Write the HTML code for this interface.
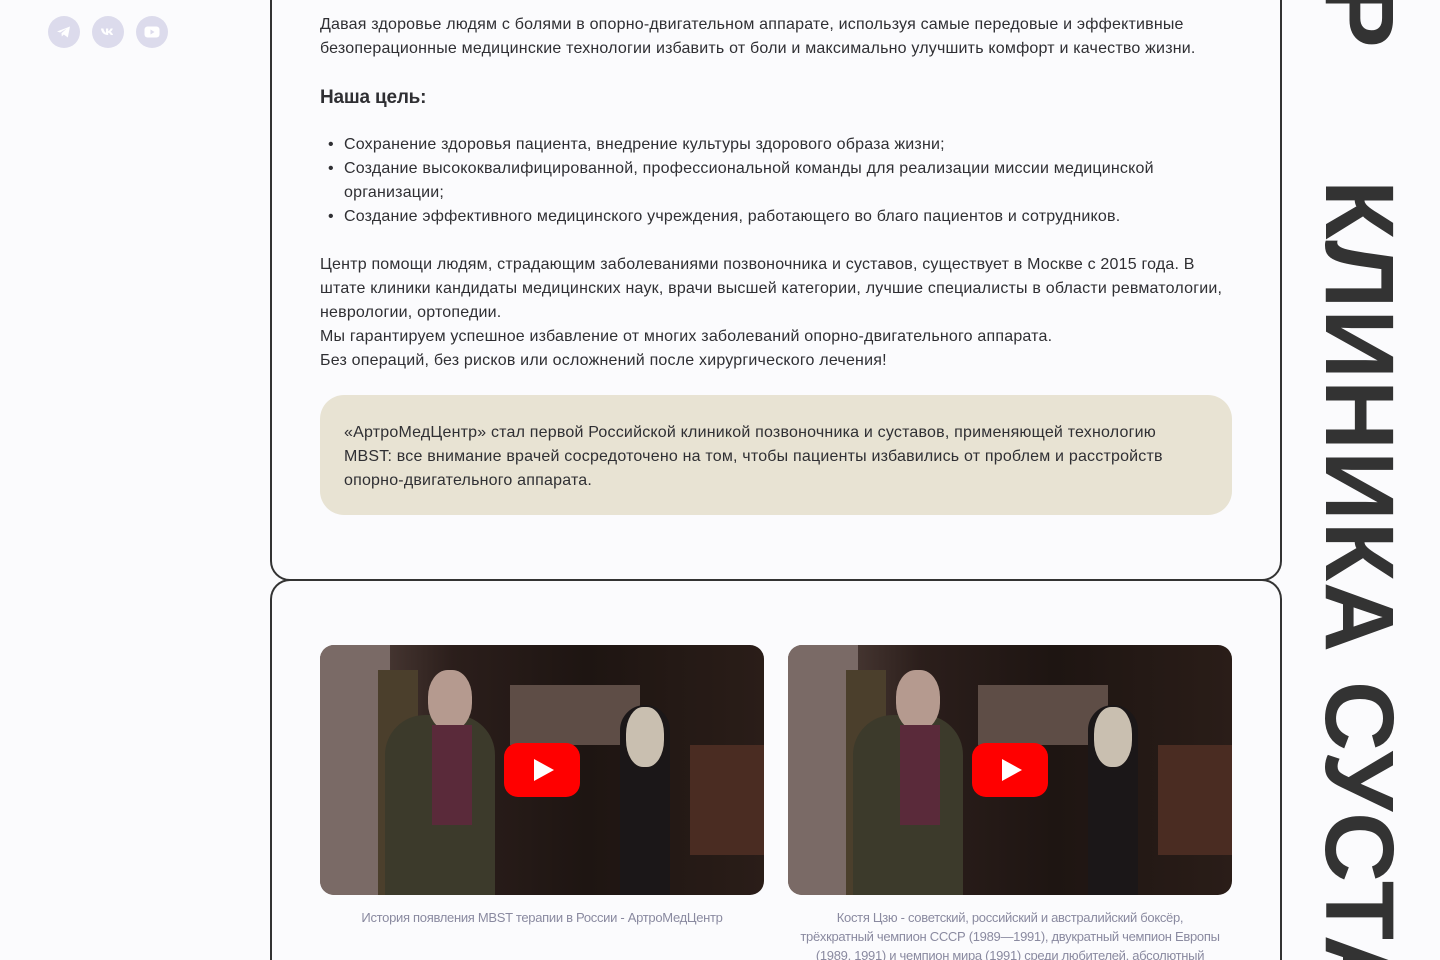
<!DOCTYPE html>
<html><head><meta charset="utf-8">
<style>
*{margin:0;padding:0;box-sizing:border-box}
html,body{width:1440px;height:960px;overflow:hidden;background:#fbfbfd;font-family:"Liberation Sans",sans-serif;color:#2f2f33}
#w{position:relative;width:1440px;height:960px;overflow:hidden}
.card{position:absolute;left:270px;width:1012px;border:2px solid #333;border-radius:20px;background:#fbfbfd}
.t{position:absolute;left:320px;font-size:16px;line-height:24px;white-space:nowrap;letter-spacing:0.2px}
.soc{position:absolute;top:16px;width:32px;height:32px;border-radius:50%;background:#dcdbec}
.vert{position:absolute;transform:rotate(90deg);transform-origin:0 0;font-weight:bold;font-size:97px;line-height:97px;color:#333;white-space:nowrap;letter-spacing:1px}
.vid{position:absolute;top:645px;width:444px;height:250px;border-radius:14px;overflow:hidden;background:linear-gradient(90deg,#6b5a55 0%,#4a3a35 12%,#2b1e1b 30%,#1e1512 60%,#2a1d18 100%)}
.vid .sh{position:absolute;background:#3a2b24}
.yt{position:absolute;left:184px;top:98px;width:76px;height:54px;border-radius:14px;background:#f00}
.yt:after{content:"";position:absolute;left:30px;top:16px;border-left:20px solid #fff;border-top:11px solid transparent;border-bottom:11px solid transparent}
.cap{position:absolute;top:908px;width:444px;text-align:center;font-size:13px;line-height:19px;color:#8a8aa0;letter-spacing:-0.3px}
</style></head><body><div id="w">
<div class="soc" style="left:48px"><svg width="32" height="32" viewBox="0 0 32 32"><path d="M9 15.5l13-5-2.2 11-4-3-2 2-.3-3.2 5.2-4.8-6.6 4z" fill="#fff"/></svg></div>
<div class="soc" style="left:92px"><svg width="32" height="32" viewBox="0 0 32 32"><path d="M9 12.5h2.4c.4 2.3 1.7 4 2.6 4.3v-4.3h2.2v2.5c1-.1 2-1.3 2.4-2.5h2.2c-.4 1.5-1.5 2.7-2.3 3.3.8.4 2 1.4 2.6 3.2h-2.4c-.5-1.2-1.5-2.1-2.5-2.2v2.2h-.3C12 19 9.3 16.4 9 12.5z" fill="#fff"/></svg></div>
<div class="soc" style="left:136px"><svg width="32" height="32" viewBox="0 0 32 32"><rect x="8.5" y="10.5" width="15" height="11" rx="3" fill="#fff"/><path d="M14.5 13.5v5l4-2.5z" fill="#dcdbec"/></svg></div>

<div class="card" style="top:-40px;height:621px"></div>
<div class="card" style="top:579px;height:381px;border-bottom:none;border-radius:20px 20px 0 0"></div>

<div class="t" style="top:13px">Давая здоровье людям с болями в опорно-двигательном аппарате, используя самые передовые и эффективные</div>
<div class="t" style="top:37px">безоперационные медицинские технологии избавить от боли и максимально улучшить комфорт и качество жизни.</div>
<div class="t" style="top:85px;font-size:19px;font-weight:bold;line-height:26px;letter-spacing:-0.2px">Наша цель:</div>
<div class="t" style="top:133px;left:328px">•</div><div class="t" style="top:133px;left:344px">Сохранение здоровья пациента, внедрение культуры здорового образа жизни;</div>
<div class="t" style="top:157px;left:328px">•</div><div class="t" style="top:157px;left:344px">Создание высококвалифицированной, профессиональной команды для реализации миссии медицинской</div>
<div class="t" style="top:181px;left:344px">организации;</div>
<div class="t" style="top:205px;left:328px">•</div><div class="t" style="top:205px;left:344px">Создание эффективного медицинского учреждения, работающего во благо пациентов и сотрудников.</div>
<div class="t" style="top:253px">Центр помощи людям, страдающим заболеваниями позвоночника и суставов, существует в Москве с 2015 года. В</div>
<div class="t" style="top:277px">штате клиники кандидаты медицинских наук, врачи высшей категории, лучшие специалисты в области ревматологии,</div>
<div class="t" style="top:301px">неврологии, ортопедии.</div>
<div class="t" style="top:325px">Мы гарантируем успешное избавление от многих заболеваний опорно-двигательного аппарата.</div>
<div class="t" style="top:349px">Без операций, без рисков или осложнений после хирургического лечения!</div>

<div style="position:absolute;left:320px;top:395px;width:912px;height:120px;border-radius:24px;background:#e8e3d3"></div>
<div class="t" style="top:421px;left:344px">«АртроМедЦентр» стал первой Российской клиникой позвоночника и суставов, применяющей технологию</div>
<div class="t" style="top:445px;left:344px">MBST: все внимание врачей сосредоточено на том, чтобы пациенты избавились от проблем и расстройств</div>
<div class="t" style="top:469px;left:344px">опорно-двигательного аппарата.</div>

<div class="vid" style="left:320px">
 <div class="sh" style="left:0;top:0;width:70px;height:250px;background:#7a6a66"></div>
 <div class="sh" style="left:58px;top:25px;width:40px;height:225px;background:#4b3f2c"></div>
 <div class="sh" style="left:65px;top:70px;width:110px;height:180px;border-radius:40px 40px 0 0;background:#3c3a2b"></div>
 <div class="sh" style="left:108px;top:25px;width:44px;height:60px;border-radius:45%;background:#b59a8f"></div>
 <div class="sh" style="left:112px;top:80px;width:40px;height:100px;background:#5a2a3a"></div>
 <div class="sh" style="left:190px;top:40px;width:130px;height:60px;background:#5e4d46"></div>
 <div class="sh" style="left:300px;top:60px;width:50px;height:190px;border-radius:25px 25px 0 0;background:#1b1718"></div>
 <div class="sh" style="left:306px;top:62px;width:38px;height:60px;border-radius:45%;background:#c9bfb0"></div>
 <div class="sh" style="left:370px;top:100px;width:74px;height:110px;background:#4a2c22"></div>
 <div class="yt"></div>
</div>
<div class="vid" style="left:788px">
 <div class="sh" style="left:0;top:0;width:70px;height:250px;background:#7a6a66"></div>
 <div class="sh" style="left:58px;top:25px;width:40px;height:225px;background:#4b3f2c"></div>
 <div class="sh" style="left:65px;top:70px;width:110px;height:180px;border-radius:40px 40px 0 0;background:#3c3a2b"></div>
 <div class="sh" style="left:108px;top:25px;width:44px;height:60px;border-radius:45%;background:#b59a8f"></div>
 <div class="sh" style="left:112px;top:80px;width:40px;height:100px;background:#5a2a3a"></div>
 <div class="sh" style="left:190px;top:40px;width:130px;height:60px;background:#5e4d46"></div>
 <div class="sh" style="left:300px;top:60px;width:50px;height:190px;border-radius:25px 25px 0 0;background:#1b1718"></div>
 <div class="sh" style="left:306px;top:62px;width:38px;height:60px;border-radius:45%;background:#c9bfb0"></div>
 <div class="sh" style="left:370px;top:100px;width:74px;height:110px;background:#4a2c22"></div>
 <div class="yt"></div>
</div>
<div class="cap" style="left:320px">История появления MBST терапии в России - АртроМедЦентр</div>
<div class="cap" style="left:788px;height:52px;overflow:hidden">Костя Цзю - советский, российский и австралийский боксёр,<br>трёхкратный чемпион СССР (1989—1991), двукратный чемпион Европы<br>(1989, 1991) и чемпион мира (1991) среди любителей, абсолютный</div>

<div class="vert" style="left:1408px;top:-17px">Р</div>
<div class="vert" style="left:1408px;top:180px">КЛИНИКА СУСТА</div>
</div></body></html>
